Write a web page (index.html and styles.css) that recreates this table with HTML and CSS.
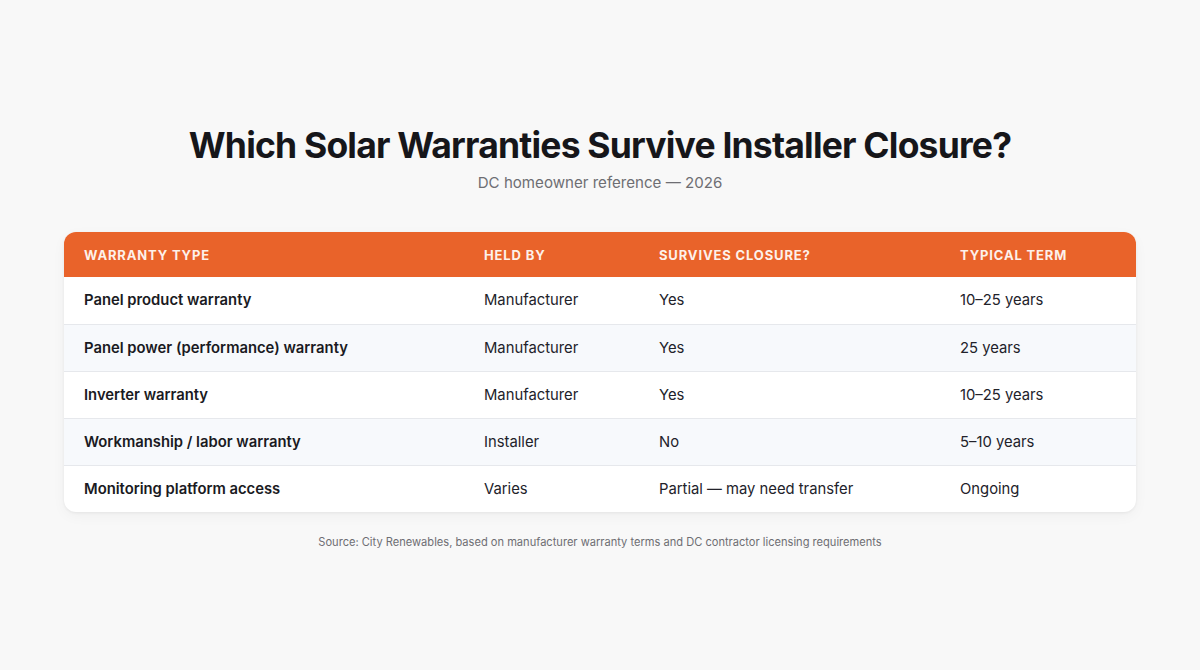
FILE: index.html
```html
<!DOCTYPE html>
<html>
<head>
<meta charset="utf-8">
<link rel="stylesheet" href="styles.css">
</head>
<body>
<main class="page">
  <h1 class="title">Which Solar Warranties Survive Installer Closure?</h1>
  <p class="subtitle">DC homeowner reference — 2026</p>
  <div class="card">
    <table class="tbl">
      <colgroup>
        <col class="c1"><col class="c2"><col class="c3"><col class="c4">
      </colgroup>
      <thead>
        <tr><th>Warranty Type</th><th>Held By</th><th>Survives Closure?</th><th>Typical Term</th></tr>
      </thead>
      <tbody>
        <tr><td class="name">Panel product warranty</td><td>Manufacturer</td><td>Yes</td><td>10–25 years</td></tr>
        <tr><td class="name">Panel power (performance) warranty</td><td>Manufacturer</td><td>Yes</td><td>25 years</td></tr>
        <tr><td class="name">Inverter warranty</td><td>Manufacturer</td><td>Yes</td><td>10–25 years</td></tr>
        <tr><td class="name">Workmanship / labor warranty</td><td>Installer</td><td>No</td><td>5–10 years</td></tr>
        <tr><td class="name">Monitoring platform access</td><td>Varies</td><td>Partial — may need transfer</td><td>Ongoing</td></tr>
      </tbody>
    </table>
  </div>
  <p class="source">Source: City Renewables, based on manufacturer warranty terms and DC contractor licensing requirements</p>
</main>
</body>
</html>
```

FILE: styles.css
```css
* { box-sizing: border-box; }
html, body { margin: 0; padding: 0; }
body {
  background: #f8f8f8;
  font-family: Inter, "Noto Sans", sans-serif;
  color: #1a1a1f;
  width: 1200px;
  height: 670px;
  overflow: hidden;
}
.page {
  display: flex;
  flex-direction: column;
  align-items: center;
  padding-top: 124px;
}
.title {
  margin: 0;
  font-size: 35.5px;
  line-height: 44px;
  font-weight: 700;
  letter-spacing: -0.8px;
  color: #16161a;
}
.subtitle {
  margin: 4px 0 0;
  font-size: 15.1px;
  line-height: 22px;
  color: #6e6e73;
}
.card {
  margin-top: 38px;
  width: 1072px;
  border-radius: 12px;
  overflow: hidden;
  background: #fff;
  box-shadow: 0 1px 3px rgba(0,0,0,0.06), 0 4px 14px rgba(0,0,0,0.04);
}
.tbl {
  width: 100%;
  border-collapse: collapse;
  table-layout: fixed;
}
.c1 { width: 400px; }
.c2 { width: 175px; }
.c3 { width: 301px; }
.c4 { width: 196px; }
.tbl th {
  background: #e9632a;
  color: #fdf1ea;
  text-align: left;
  text-transform: uppercase;
  font-size: 13px;
  font-weight: 700;
  letter-spacing: 0.85px;
  height: 45px;
  padding: 0 20px;
}
.tbl td {
  height: 47px;
  padding: 0 20px;
  font-size: 14.8px;
  color: #22222a;
  border-top: 1px solid #e6e8ec;
}
.tbl tbody tr:first-child td { border-top: none; }
.tbl tbody tr:nth-child(even) td { background: #f7f9fc; }
.tbl td.name { font-weight: 600; color: #1a1a22; }
.source {
  margin: 23px 0 0;
  font-size: 11.1px;
  color: #6e6e73;
}
```
